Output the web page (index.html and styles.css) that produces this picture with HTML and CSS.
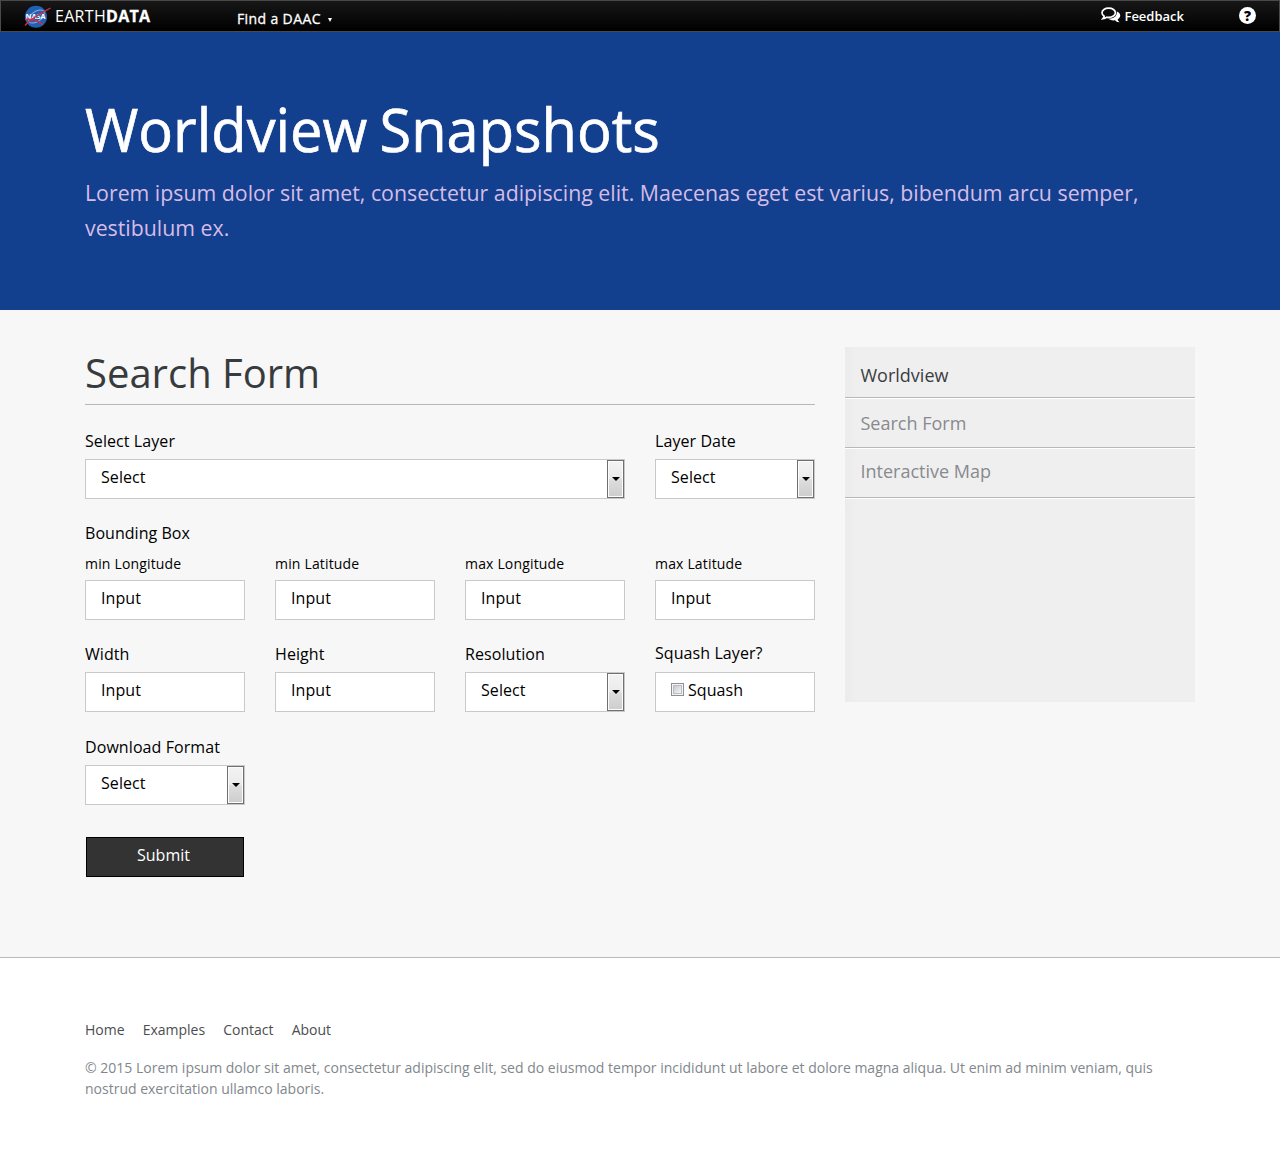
FILE: index.html
```html
<!DOCTYPE html>
<html lang="en">
<head>
<meta charset="utf-8">
<title>Worldview Snapshots</title>
<link rel="stylesheet" href="styles.css">
</head>
<body>
<header class="topbar">
  <div class="brand">
    <svg class="brand-logo" width="28" height="24" viewBox="0 0 28 24">
      <circle cx="13" cy="12.7" r="11" fill="#2361b0"/>
      <ellipse cx="13.5" cy="12.5" rx="9" ry="5" fill="none" stroke="#7fb0e4" stroke-width="1" transform="rotate(-35 13.5 12.5)"/>
      <text x="2.6" y="15.3" class="logo-text" textLength="20" lengthAdjust="spacingAndGlyphs">NASA</text>
      <path d="M2 21.5C8 14 19 9 27.5 4M2 15.5c7-1 12 1 18 5" fill="none" stroke="#d22c46" stroke-width="1.4"/>
    </svg>
    <span class="brand-name">EARTH<b>DATA</b></span>
  </div>
  <a class="daac">Find a DAAC <span class="caret"></span></a>
  <a class="feedback">
    <svg width="20" height="17" viewBox="0 0 20 17">
      <path d="M15.8 4.6c4.3 1.7 4.5 5.6.9 7.7.2 1.3.9 2.1 1.8 2.9-2 .1-3.400-.6-4.500-1.900-2.800.4-5.200-.2-6.900-1.700 5.600.2 9.200-2.500 8.700-7z" fill="#fff"/>
      <path d="M7.700 1.200c3.800 0 6.700 2 6.700 4.600s-2.900 4.600-6.700 4.600c-.7 0-1.300 0-1.900-.2-1.100.9-2.200 1.400-3.900 1.500.8-.8 1.200-1.500 1.300-2.500C1.800 8.300 1 7.100 1 5.800c0-2.600 2.900-4.600 6.700-4.600z" fill="#0b0b0b" stroke="#fff" stroke-width="1.7"/>
    </svg>
    <span class="feedback-text">Feedback</span>
  </a>
  <a class="help">?</a>
</header>

<section class="hero">
  <h1 class="hero-title"><span class="narrow-title">Worldview Snapshots</span></h1>
  <p class="hero-lead"><span class="narrow-lead">Lorem ipsum dolor sit amet, consectetur adipiscing elit. Maecenas eget est varius, bibendum arcu semper,<br>vestibulum ex.</span></p>
</section>

<main class="content">
  <form class="search">
    <h2 class="section-title">Search Form</h2>
    <div class="grid first">
      <div class="field wide"><label class="label">Select Layer</label><div class="box">Select<span class="arrow"></span></div></div>
      <div class="field"><label class="label">Layer Date</label><div class="box">Select<span class="arrow"></span></div></div>
    </div>
    <div class="group-label">Bounding Box</div>
    <div class="grid">
      <div class="field"><label class="label small">min Longitude</label><div class="box">Input</div></div>
      <div class="field"><label class="label small">min Latitude</label><div class="box">Input</div></div>
      <div class="field"><label class="label small">max Longitude</label><div class="box">Input</div></div>
      <div class="field"><label class="label small">max Latitude</label><div class="box">Input</div></div>
    </div>
    <div class="grid sizes">
      <div class="field"><label class="label">Width</label><div class="box">Input</div></div>
      <div class="field"><label class="label">Height</label><div class="box">Input</div></div>
      <div class="field"><label class="label">Resolution</label><div class="box">Select<span class="arrow"></span></div></div>
      <div class="field"><label class="label raised">Squash Layer?</label><div class="box"><span class="check"></span>Squash</div></div>
    </div>
    <div class="grid format">
      <div class="field"><label class="label">Download Format</label><div class="box">Select<span class="arrow"></span></div></div>
    </div>
    <button class="submit" type="button">Submit</button>
  </form>
  <nav class="side">
    <a class="side-item current">Worldview</a>
    <a class="side-item second">Search Form</a>
    <a class="side-item third">Interactive Map</a>
  </nav>
</main>

<footer class="footer">
  <nav class="links"><a>Home</a><a>Examples</a><a>Contact</a><a>About</a></nav>
  <p class="copy">© 2015 Lorem ipsum dolor sit amet, consectetur adipiscing elit, sed do eiusmod tempor incididunt ut labore et dolore magna aliqua. Ut enim ad minim veniam, quis<br>nostrud exercitation ullamco laboris.</p>
</footer>
</body>
</html>
```
FILE: styles.css
```css
* { box-sizing: border-box; }
body {
  margin: 0;
  min-height: 1164px;
  background: #fff;
  color: #000;
  font: 16px/22px "Open Sans", "Noto Sans", sans-serif;
}
h1, h2, p { margin: 0; font-weight: 400; }

.topbar {
  height: 32px;
  display: flex;
  align-items: flex-start;
  padding: 3px 23px 0 22px;
  border: 1px solid #4a4a4a;
  background: linear-gradient(#171717, #000);
  color: #fff;
}
.brand { display: flex; width: 214px; gap: 4px; }
.brand-logo { flex: none; }
.logo-text { font: bold 7px "Open Sans", sans-serif; fill: #fff; }
.brand-name { font-size: 16px; line-height: 24px; letter-spacing: 0.3px; }
.brand-name b { font-weight: 700; -webkit-text-stroke: 0.3px #fff; }
.daac { display: flex; align-items: center; gap: 7px; font-size: 14px; line-height: 30px; letter-spacing: 0.38px; -webkit-text-stroke: 0.3px #fff; }
.caret {
  border: 2.5px solid transparent;
  border-top: 4px solid #fff;
  border-bottom: 0;
  margin-top: 2px;
}
.feedback { display: flex; align-items: center; gap: 3px; height: 23px; margin-left: auto; font-size: 13px; font-weight: 600; }
.help {
  width: 17px;
  height: 17px;
  margin: 3px 0 0 55px;
  border-radius: 50%;
  background: #fff;
  color: #000;
  font-size: 14px;
  font-weight: 800;
  line-height: 17px;
  text-align: center;
}

.hero { height: 278px; padding: 56px 85px 0; background: #133f8f; white-space: nowrap; }
.hero-title { height: 82px; color: #fff; font-size: 60px; line-height: 82px; -webkit-text-stroke: 0.7px #fff; }
.hero-lead { padding-top: 5px; color: #d5bde6; font-size: 22.5px; line-height: 35px; }
.narrow-title, .narrow-lead { display: inline-block; transform-origin: left; }
.narrow-title { transform: scaleX(0.963); word-spacing: -3px; }
.narrow-lead { transform: scaleX(0.947); }

.content {
  display: flex;
  gap: 30px;
  height: 647px;
  padding: 35px 85px 0;
  background: #f7f7f7;
}
.search { width: 730px; }
.section-title {
  height: 60px;
  border-bottom: 1px solid #b3babd;
  color: #373b3e;
  font-size: 40px;
  line-height: 56px;
}
.grid { display: grid; grid-template-columns: repeat(4, 160px); column-gap: 30px; }
.first { margin-top: 25px; }
.wide { grid-column: span 3; }
.group-label { margin: 23px 0 10px; letter-spacing: 0.04px; }
.sizes { margin-top: 23px; }
.format { margin-top: 24px; }
.label { display: block; height: 29px; letter-spacing: 0.08px; }
.small { height: 26px; font-size: 14px; line-height: 20px; letter-spacing: 0.17px; }
.raised { margin-top: -1px; height: 30px; }
.box {
  position: relative;
  height: 40px;
  padding: 6px 15px;
  border: 1px solid #c9c9c9;
  background: #fff;
  letter-spacing: 0.08px;
}
.arrow {
  position: absolute;
  top: 0;
  right: 0;
  width: 17px;
  height: 38px;
  border: 1px solid #707070;
  background: linear-gradient(#f3f3f3, #ebebeb 48%, #dddddd 52%, #cdcdcd);
  box-shadow: inset 0 0 0 1px #fcfcfc;
}
.arrow::after {
  content: "";
  position: absolute;
  left: 3.5px;
  top: 16px;
  border: 4px solid transparent;
  border-top: 4px solid #000;
  border-bottom: 0;
}
.check {
  display: inline-block;
  width: 13px;
  height: 13px;
  margin-right: 4px;
  border: 1px solid #8e8f8f;
  background: linear-gradient(135deg, #c4c8cf, #f6f6f6) content-box #f4f4f4;
  padding: 2px;
  box-shadow: inset 0 0 0 1px #f4f4f4, inset 0 0 0 2px #b9bcc2;
}
.submit {
  display: block;
  width: 158px;
  height: 40px;
  margin: 32px 0 0 1px;
  padding: 0 3px 4px 0;
  border: 1px solid #000;
  background: #333;
  color: #fff;
  font: inherit;
}

.side {
  width: 350px;
  height: 355px;
  margin-top: 2px;
  background: linear-gradient(90deg, #ebebeb, #efefef 12px);
  color: #888a8e;
  font-size: 18px;
  line-height: 24px;
}
.side-item {
  display: block;
  height: 50px;
  padding: 12px 15.5px 0;
  border-bottom: 1px solid #b3babd;
  box-shadow: 0 1px #fff;
}
.current { height: 51px; padding-top: 16px; color: #3a3d3f; }
.second { padding-top: 13px; }
.third { padding-top: 11px; }

.footer { padding: 61px 85px 0; border-top: 1px solid #bbb; font-size: 14px; line-height: 21px; }
.links { display: flex; gap: 18.1px; color: #4b4e50; }
.copy { margin-top: 17px; color: #81878c; white-space: nowrap; }
```
